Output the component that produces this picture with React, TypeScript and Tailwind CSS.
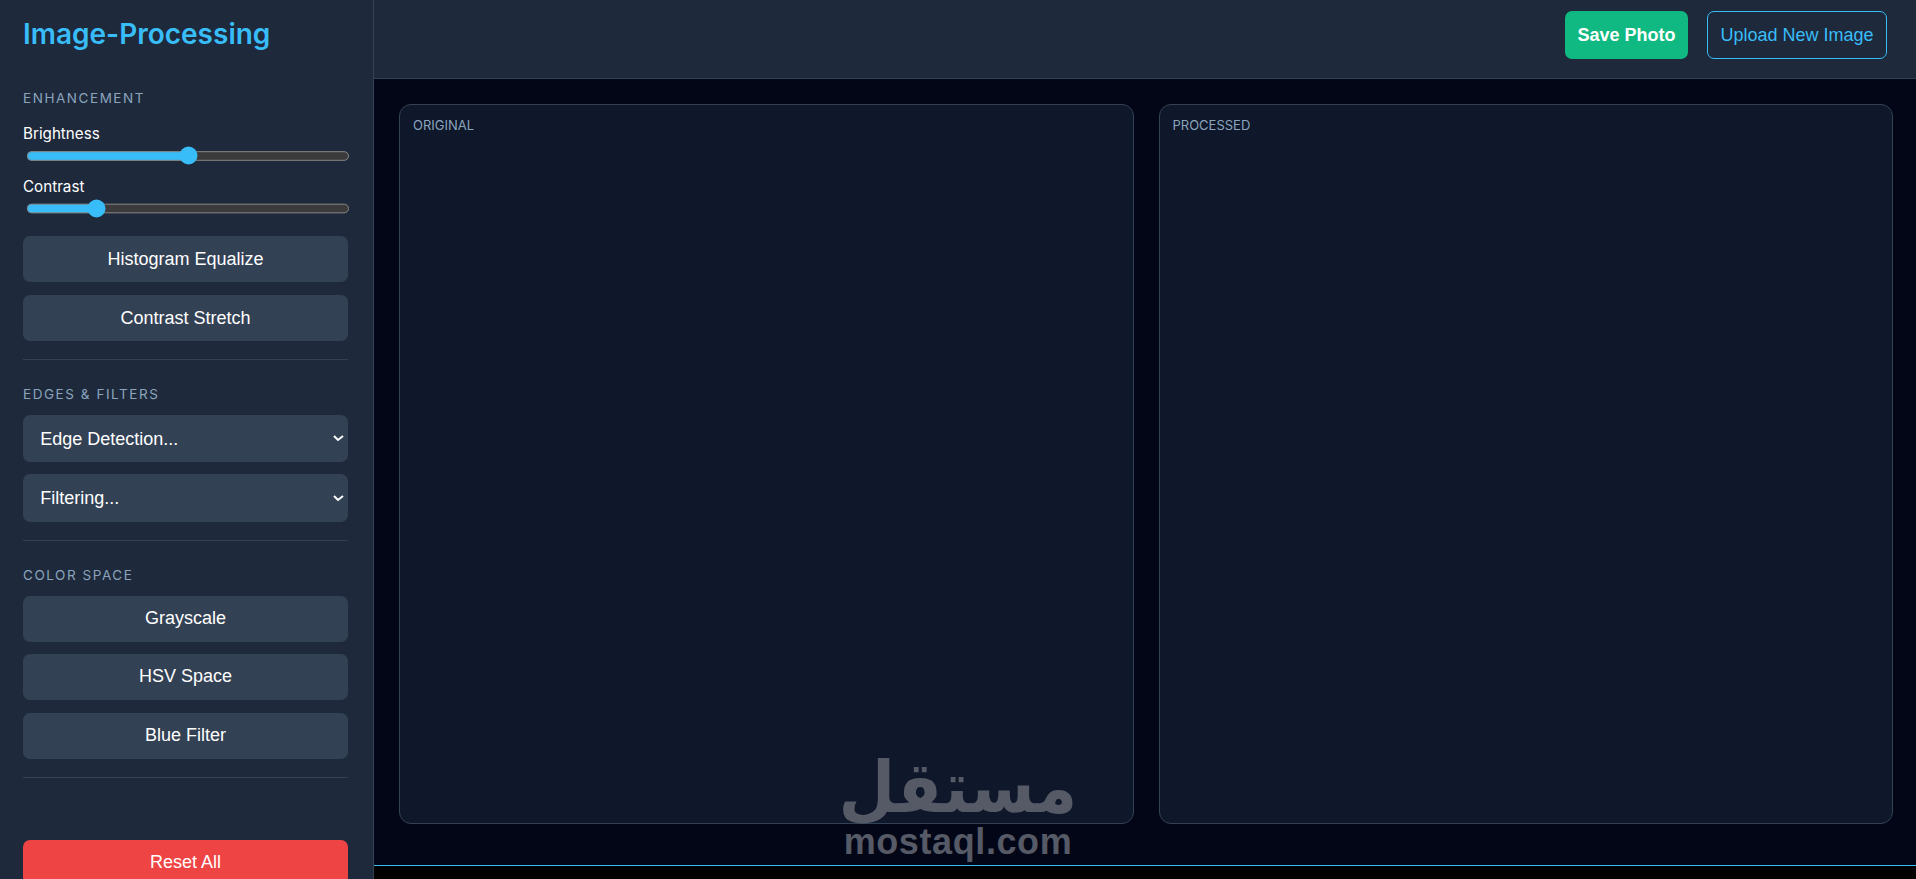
export default function App() {
  const Label = ({ children, className = "" }: { children: string; className?: string }) => (
    <div className={`text-[13.5px] leading-[16px] tracking-[1.55px] text-[#8aa4bd] font-[Inter,sans-serif] ${className}`}>{children}</div>
  );
  const Btn = ({ children, className = "" }: { children: string; className?: string }) => (
    <button className={`block w-full h-[46px] rounded-[7px] bg-[#334155] text-white text-[18px] font-['Liberation_Sans',Arial,sans-serif] ${className}`}>{children}</button>
  );
  const Sel = ({ children, className = "" }: { children: string; className?: string }) => (
    <select defaultValue={children} className={`block w-full h-[39.2px] rounded-[6px] bg-[#334155] text-white pl-[11px] pr-0 text-[15px] font-['Liberation_Sans',Arial,sans-serif] appearance-auto [zoom:1.2] ${className}`}>
      <option>{children}</option>
    </select>
  );
  const Slider = ({ value, label, className = "" }: { value: number; label: string; className?: string }) => (
    <>
      <div className={`text-[15.2px] leading-[18px] text-white font-[Inter,sans-serif] ${className}`}>{label}</div>
      <input type="range" min={0} max={100} defaultValue={value} className="block w-[270px] ml-[2.6px] mt-[1.7px] h-[18px] accent-[#38bdf8] appearance-auto [zoom:1.2]" />
    </>
  );
  return (
    <div className="flex h-screen w-full overflow-hidden bg-black font-[Inter,sans-serif]">
      <aside className="w-[374px] shrink-0 h-full overflow-hidden bg-[#1e293b] border-r border-[#334155] pl-[23px] pr-[25px]">
        <h1 className="mt-[17px] text-[28px] leading-[35px] font-semibold text-[#38bdf8] font-[Inter,sans-serif]">Image-Processing</h1>
        <Label className="mt-[38px]">ENHANCEMENT</Label>
        <Slider label="Brightness" value={50} className="mt-[19px]" />
        <Slider label="Contrast" value={20} className="mt-[11px]" />
        <Btn className="mt-[17px]">Histogram Equalize</Btn>
        <Btn className="mt-[13px]">Contrast Stretch</Btn>
        <div className="mt-[18px] h-px bg-[#334155]" />
        <Label className="mt-[26px]">EDGES &amp; FILTERS</Label>
        <Sel className="mt-[11px]">Edge Detection...</Sel>
        <Sel className="mt-[10px]">Filtering...</Sel>
        <div className="mt-[18px] h-px bg-[#334155]" />
        <Label className="mt-[26px]">COLOR SPACE</Label>
        <Btn className="mt-[13px]">Grayscale</Btn>
        <Btn className="mt-[12px]">HSV Space</Btn>
        <Btn className="mt-[13px]">Blue Filter</Btn>
        <div className="mt-[18px] h-px bg-[#334155]" />
        <Btn className="mt-[62px] bg-[#ef4444]">Reset All</Btn>
      </aside>
      <div className="relative flex-1 flex flex-col min-w-0">
        <header className="h-[79px] shrink-0 bg-[#1e293b] border-b border-[#334155] flex items-center justify-end gap-[19px] pr-[29px] pb-[8px]">
          <button className="w-[123px] h-[48px] rounded-[7px] bg-[#10b981] text-white text-[18px] font-bold font-['Liberation_Sans',Arial,sans-serif]">Save Photo</button>
          <button className="w-[180px] h-[48px] rounded-[7px] border border-[#38bdf8] text-[#38bdf8] text-[18px] font-['Liberation_Sans',Arial,sans-serif]">Upload New Image</button>
        </header>
        <main className="flex-1 min-h-0 bg-[#020617] flex gap-[25px] pl-[25px] pr-[23px] pt-[25px] pb-[41px]">
          <section className="flex-1 rounded-[12px] bg-[#0f172a] border border-[#334155] px-[13px] py-[12px]">
            <div className="text-[13px] leading-[17px] text-[#8aa4bd]">ORIGINAL</div>
          </section>
          <section className="flex-1 rounded-[12px] bg-[#0f172a] border border-[#334155] px-[13px] py-[12px]">
            <div className="text-[13px] leading-[17px] text-[#8aa4bd]">PROCESSED</div>
          </section>
        </main>
        <div className="h-[14px] shrink-0 bg-black border-t border-[#38bdf8]" />
        <div className="absolute left-[469px] top-[745px] w-[230px] flex flex-col items-center text-[#555a66] pointer-events-none">
          <div dir="rtl" lang="ar" className="h-[80px] text-[71px] leading-[86px] font-bold scale-x-[0.92] font-['DejaVu_Sans',sans-serif]">مستقل</div>
          <div className="h-[34px] text-[36px] leading-[34px] font-bold tracking-[0.6px] font-['Liberation_Sans',Arial,sans-serif]">mostaql.com</div>
        </div>
      </div>
    </div>
  );
}
